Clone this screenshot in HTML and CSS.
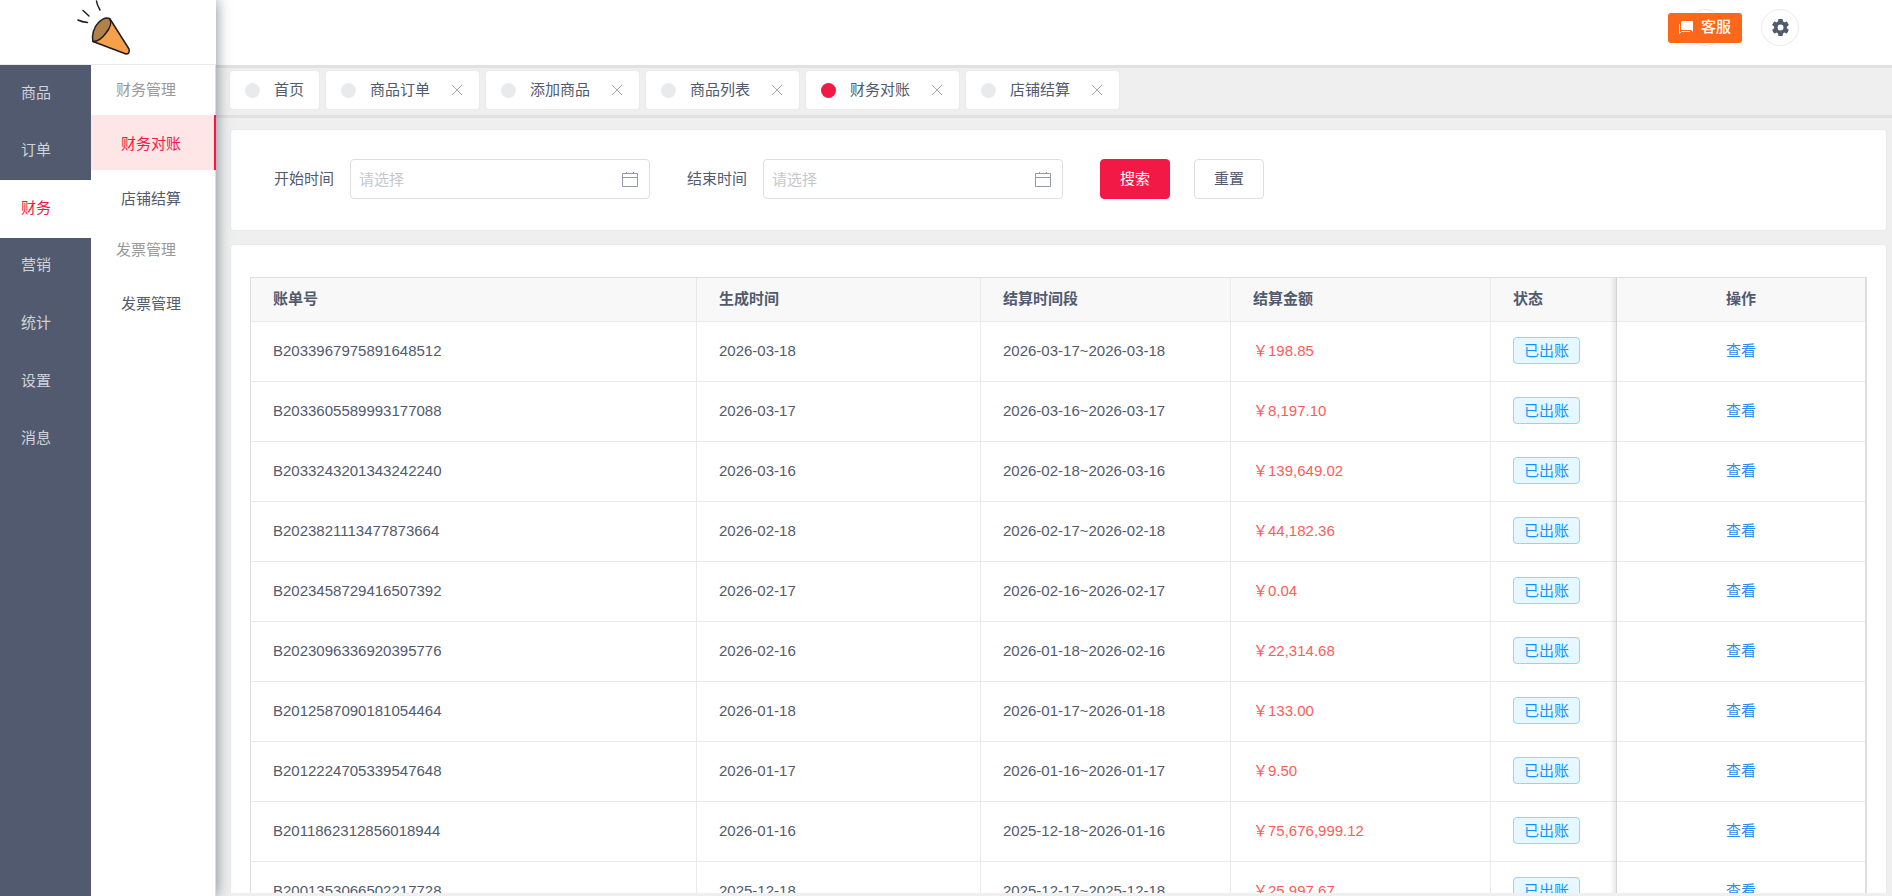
FILE: index.html
```html
<!DOCTYPE html>
<html lang="zh-CN">
<head>
    <meta charset="utf-8">
    <title>财务对账</title>
    <meta name="viewport" content="width=device-width, initial-scale=1">
    <link rel="stylesheet" href="styles.css">
</head>
<body>
    <!-- 侧边栏 -->
    <aside id="sidebar">
        <a href="#" class="logo" aria-label="首页">
            <svg width="60" height="64" viewBox="72 0 60 64" fill="none" stroke="#231a1e" stroke-width="1.5" stroke-linecap="round" stroke-linejoin="round">
                <path d="M96.500 1Q97 5 100 10M83 10.500l6 5.500M78 20q4 2 9.500 2.500"/>
                <path d="M110 19l19 30q1 5-3 5L93 41.500z" fill="#f5a04a"/>
                <path d="M109.500 18.500q-5-2-11 4c-5 5-7 13-5.500 19 5 0 9-3 13-8.500 4-5 6-11 3.500-14.500z" fill="#b28049"/>
            </svg>
        </a>
        <div class="menus">
            <nav class="main-menu">
                <a href="#">商品</a>
                <a href="#">订单</a>
                <a href="#" class="active">财务</a>
                <a href="#">营销</a>
                <a href="#">统计</a>
                <a href="#">设置</a>
                <a href="#">消息</a>
            </nav>
            <nav class="sub-menu">
                <div class="title">财务管理</div>
                <a href="#" class="active">财务对账</a>
                <a href="#">店铺结算</a>
                <div class="title">发票管理</div>
                <a href="#">发票管理</a>
            </nav>
        </div>
    </aside>

    <div id="page">
        <header>
            <div class="circle">
                <button type="button" class="service">
                    <svg width="14" height="14" viewBox="0 0 14 14" fill="#fff"><path d="M3 1h10q1 0 1 1v10l-2-2H3q-1 0-1-1V2q0-1 1-1z"/><path d="M.5 4v9.500l2-2H11" fill="none" stroke="#fff"/></svg>
                    客服
                </button>
            </div>
            <button type="button" class="circle" aria-label="设置">
                <svg width="17" height="17" viewBox="2 2 20 20" fill="#515a6e"><path d="M19.430 12.980c.04-.32.07-.64.07-.98s-.03-.66-.07-.98l2.110-1.650c.19-.15.24-.42.12-.64l-2-3.460c-.12-.22-.39-.3-.61-.22l-2.490 1c-.52-.4-1.080-.73-1.690-.98l-.38-2.650A.488.488 0 0 0 14 2h-4c-.25 0-.46.18-.49.42l-.38 2.650c-.61.25-1.170.59-1.690.98l-2.490-1c-.23-.09-.49 0-.61.22l-2 3.460c-.13.22-.07.49.12.64l2.110 1.650c-.04.32-.07.65-.07.98s.03.66.07.98l-2.110 1.650c-.19.15-.24.42-.12.64l2 3.460c.12.22.39.3.61.22l2.490-1c.52.4 1.080.73 1.690.98l.38 2.650c.03.24.24.42.49.42h4c.25 0 .46-.18.49-.42l.38-2.650c.61-.25 1.170-.59 1.690-.98l2.490 1c.23.09.49 0 .61-.22l2-3.460c.12-.22.07-.49-.12-.64l-2.110-1.650zM12 15.500a3.500 3.500 0 1 1 0-7 3.500 3.500 0 0 1 0 7z"/></svg>
            </button>
        </header>

        <!-- 已打开的标签页 -->
        <div class="tabs">
            <a href="#" class="tab"><i class="dot"></i>首页</a>
            <a href="#" class="tab"><i class="dot"></i>商品订单<svg class="close" viewBox="0 0 10 10"><path d="M0 0l10 10M10 0L0 10"/></svg></a>
            <a href="#" class="tab"><i class="dot"></i>添加商品<svg class="close" viewBox="0 0 10 10"><path d="M0 0l10 10M10 0L0 10"/></svg></a>
            <a href="#" class="tab"><i class="dot"></i>商品列表<svg class="close" viewBox="0 0 10 10"><path d="M0 0l10 10M10 0L0 10"/></svg></a>
            <a href="#" class="tab active"><i class="dot"></i>财务对账<svg class="close" viewBox="0 0 10 10"><path d="M0 0l10 10M10 0L0 10"/></svg></a>
            <a href="#" class="tab"><i class="dot"></i>店铺结算<svg class="close" viewBox="0 0 10 10"><path d="M0 0l10 10M10 0L0 10"/></svg></a>
        </div>

        <main>
            <form class="card search">
                <label for="start">开始时间</label>
                <div class="date">
                    <input type="text" id="start" placeholder="请选择">
                    <svg width="16" height="16" viewBox="0 0 16 16"><path d="M.5 2.500h15v13H.5zM.5 6.500h15M4.500 1v2M11.500 1v2"/></svg>
                </div>
                <label for="end">结束时间</label>
                <div class="date">
                    <input type="text" id="end" placeholder="请选择">
                    <svg width="16" height="16" viewBox="0 0 16 16"><path d="M.5 2.500h15v13H.5zM.5 6.500h15M4.500 1v2M11.500 1v2"/></svg>
                </div>
                <button type="button" class="btn primary">搜索</button>
                <button type="button" class="btn">重置</button>
            </form>

            <div class="card list">
                <table>
                    <colgroup>
                        <col>
                        <col class="w-created">
                        <col class="w-period">
                        <col class="w-amount">
                        <col class="w-status">
                        <col class="w-action">
                    </colgroup>
                    <thead>
                        <tr>
                            <th>账单号</th>
                            <th>生成时间</th>
                            <th>结算时间段</th>
                            <th>结算金额</th>
                            <th>状态</th>
                            <th class="fixed">操作</th>
                        </tr>
                    </thead>
                    <tbody>
                        <tr>
                            <td>B2033967975891648512</td>
                            <td>2026-03-18</td>
                            <td>2026-03-17~2026-03-18</td>
                            <td class="price">￥198.85</td>
                            <td><span class="tag">已出账</span></td>
                            <td class="fixed"><a href="#">查看</a></td>
                        </tr>
                        <tr>
                            <td>B2033605589993177088</td>
                            <td>2026-03-17</td>
                            <td>2026-03-16~2026-03-17</td>
                            <td class="price">￥8,197.10</td>
                            <td><span class="tag">已出账</span></td>
                            <td class="fixed"><a href="#">查看</a></td>
                        </tr>
                        <tr>
                            <td>B2033243201343242240</td>
                            <td>2026-03-16</td>
                            <td>2026-02-18~2026-03-16</td>
                            <td class="price">￥139,649.02</td>
                            <td><span class="tag">已出账</span></td>
                            <td class="fixed"><a href="#">查看</a></td>
                        </tr>
                        <tr>
                            <td>B2023821113477873664</td>
                            <td>2026-02-18</td>
                            <td>2026-02-17~2026-02-18</td>
                            <td class="price">￥44,182.36</td>
                            <td><span class="tag">已出账</span></td>
                            <td class="fixed"><a href="#">查看</a></td>
                        </tr>
                        <tr>
                            <td>B2023458729416507392</td>
                            <td>2026-02-17</td>
                            <td>2026-02-16~2026-02-17</td>
                            <td class="price">￥0.04</td>
                            <td><span class="tag">已出账</span></td>
                            <td class="fixed"><a href="#">查看</a></td>
                        </tr>
                        <tr>
                            <td>B2023096336920395776</td>
                            <td>2026-02-16</td>
                            <td>2026-01-18~2026-02-16</td>
                            <td class="price">￥22,314.68</td>
                            <td><span class="tag">已出账</span></td>
                            <td class="fixed"><a href="#">查看</a></td>
                        </tr>
                        <tr>
                            <td>B2012587090181054464</td>
                            <td>2026-01-18</td>
                            <td>2026-01-17~2026-01-18</td>
                            <td class="price">￥133.00</td>
                            <td><span class="tag">已出账</span></td>
                            <td class="fixed"><a href="#">查看</a></td>
                        </tr>
                        <tr>
                            <td>B2012224705339547648</td>
                            <td>2026-01-17</td>
                            <td>2026-01-16~2026-01-17</td>
                            <td class="price">￥9.50</td>
                            <td><span class="tag">已出账</span></td>
                            <td class="fixed"><a href="#">查看</a></td>
                        </tr>
                        <tr>
                            <td>B2011862312856018944</td>
                            <td>2026-01-16</td>
                            <td>2025-12-18~2026-01-16</td>
                            <td class="price">￥75,676,999.12</td>
                            <td><span class="tag">已出账</span></td>
                            <td class="fixed"><a href="#">查看</a></td>
                        </tr>
                        <tr>
                            <td>B2001353066502217728</td>
                            <td>2025-12-18</td>
                            <td>2025-12-17~2025-12-18</td>
                            <td class="price">￥25,997.67</td>
                            <td><span class="tag">已出账</span></td>
                            <td class="fixed"><a href="#">查看</a></td>
                        </tr>
                    </tbody>
                </table>
            </div>
        </main>
    </div>
</body>
</html>
```

FILE: styles.css
```css
* {
    box-sizing: border-box;
}

body {
    display: flex;
    height: 100vh;
    margin: 0;
    overflow: hidden;
    background: #efefef;
    color: #515a6e;
    font-family: "Liberation Sans", "Noto Sans CJK SC", sans-serif;
    font-size: 15px;
    line-height: 24px;
}

a {
    color: inherit;
    text-decoration: none;
}

button, input {
    font: inherit;
    color: inherit;
}

button {
    cursor: pointer;
}

/* 侧边栏 */
#sidebar {
    display: flex;
    flex-direction: column;
    flex: none;
    width: 216px;
    background: #fff;
    box-shadow: 2px 0 12px rgba(54, 68, 88, 0.5);
    z-index: 2;
}

.logo {
    display: flex;
    justify-content: center;
    height: 65px;
    padding-right: 12px;
    border-bottom: 1px solid #e8eaec;
}

.menus {
    display: flex;
    flex: 1;
}

.main-menu {
    display: grid;
    grid-template-rows: repeat(7, 1fr) calc(100% - 403px);
    width: 91px;
    background: #515a6e;
    color: #d0d3d9;
}

.main-menu a {
    display: flex;
    align-items: center;
    padding: 0 0 2px 21px;
}

.main-menu .active {
    background: #fff;
    color: #f31947;
}

.sub-menu {
    flex: 1;
    border-right: 1px solid #dcdee2;
}

.sub-menu .title {
    padding-left: 25px;
    color: #999;
    line-height: 50px;
}

.sub-menu a {
    display: block;
    height: 55px;
    padding-left: 30px;
    line-height: 57px;
}

.sub-menu .active {
    margin-right: -1px;
    border-right: 2px solid #f31947;
    background: #ffe6e6;
    color: #f31947;
}

/* 顶部 */
#page {
    display: flex;
    flex-direction: column;
    flex: 1;
    min-width: 0;
}

header {
    display: flex;
    justify-content: flex-end;
    gap: 37px;
    height: 65px;
    padding: 9px 93px 0 0;
    background: #fff;
}

.circle {
    display: flex;
    align-items: center;
    justify-content: center;
    width: 38px;
    height: 37px;
    padding: 0;
    border: 1px solid #e8eaec;
    border-radius: 50%;
    background: #fff;
}

.service {
    display: flex;
    align-items: center;
    justify-content: center;
    gap: 8px;
    flex: none;
    width: 74px;
    height: 30px;
    padding: 0 0 2px;
    border: 0;
    border-radius: 3px;
    background: #fc6719;
    color: #fff;
    font-weight: 500;
}

.tabs {
    display: flex;
    gap: 7px;
    height: 53px;
    padding: 3px 14px;
    border: solid #e1e1e1;
    border-width: 3px 0;
}

.tab {
    display: flex;
    align-items: center;
    height: 38px;
    padding: 0 15px;
    border-radius: 3px;
    background: #fff;
    box-shadow: 0 0 1px #d0d0d0;
}

.dot {
    width: 15px;
    height: 15px;
    margin-right: 14px;
    border-radius: 50%;
    background: #e8eaec;
}

.tab.active .dot {
    background: #f31947;
}

.close {
    width: 10px;
    height: 10px;
    margin: 0 2px 0 22px;
    stroke: #aaa;
    overflow: visible;
}

/* 内容区 */
main {
    flex: 1;
    min-height: 0;
    margin: 11px 5px 3px 14px;
    overflow: hidden;
}

.card {
    border: 1px solid #e8eaec;
    border-radius: 4px;
    background: #fff;
}

.search {
    display: flex;
    align-items: center;
    height: 102px;
    margin-bottom: 13px;
    padding: 0 43px 2px;
}

.search label {
    margin-right: 16px;
}

.date {
    position: relative;
    width: 300px;
    margin-right: 37px;
}

.date input {
    display: block;
    width: 100%;
    height: 40px;
    padding: 0 8px;
    border: 1px solid #dcdee2;
    border-radius: 4px;
    background: #fff;
}

.date input::placeholder {
    color: #c5c8ce;
}

.date svg {
    position: absolute;
    top: 12px;
    right: 12px;
    fill: none;
    stroke: #9298a8;
}

.btn {
    width: 70px;
    height: 40px;
    margin-right: 24px;
    padding: 0;
    border: 1px solid #dcdee2;
    border-radius: 4px;
    background: #fff;
}

.btn.primary {
    border-color: #f31947;
    background: #f31947;
    color: #fff;
}

/* 账单表格 */
.list {
    padding: 32px 19px;
}

table {
    width: 100%;
    table-layout: fixed;
    border: 1px solid #dcdee2;
    border-right-width: 2px;
    border-spacing: 0;
}

.w-created { width: 284px; }
.w-period { width: 250px; }
.w-amount { width: 260px; }
.w-status { width: 126px; }
.w-action { width: 248px; }

th, td {
    height: 60px;
    padding: 0 22px 2px;
    border-right: 1px solid #e8eaec;
    border-bottom: 1px solid #e8eaec;
    text-align: left;
}

th {
    height: 44px;
    background: #f8f8f9;
}

.price {
    color: #ff5c58;
}

.tag {
    display: inline-block;
    height: 27px;
    padding: 0 10px;
    border: 1px solid #91d5ff;
    border-radius: 4px;
    background: #e6f7ff;
    color: #1890ff;
    line-height: 25px;
    vertical-align: middle;
}

.fixed {
    position: relative;
    border-right: 0;
    text-align: center;
}

/* 固定列左侧阴影 */
.fixed::before {
    content: "";
    position: absolute;
    top: 0;
    bottom: -1px;
    left: -7px;
    width: 7px;
    background: linear-gradient(to left, rgba(0, 0, 0, 0.1), transparent);
}

.fixed a {
    color: #2d8cf0;
}
```
